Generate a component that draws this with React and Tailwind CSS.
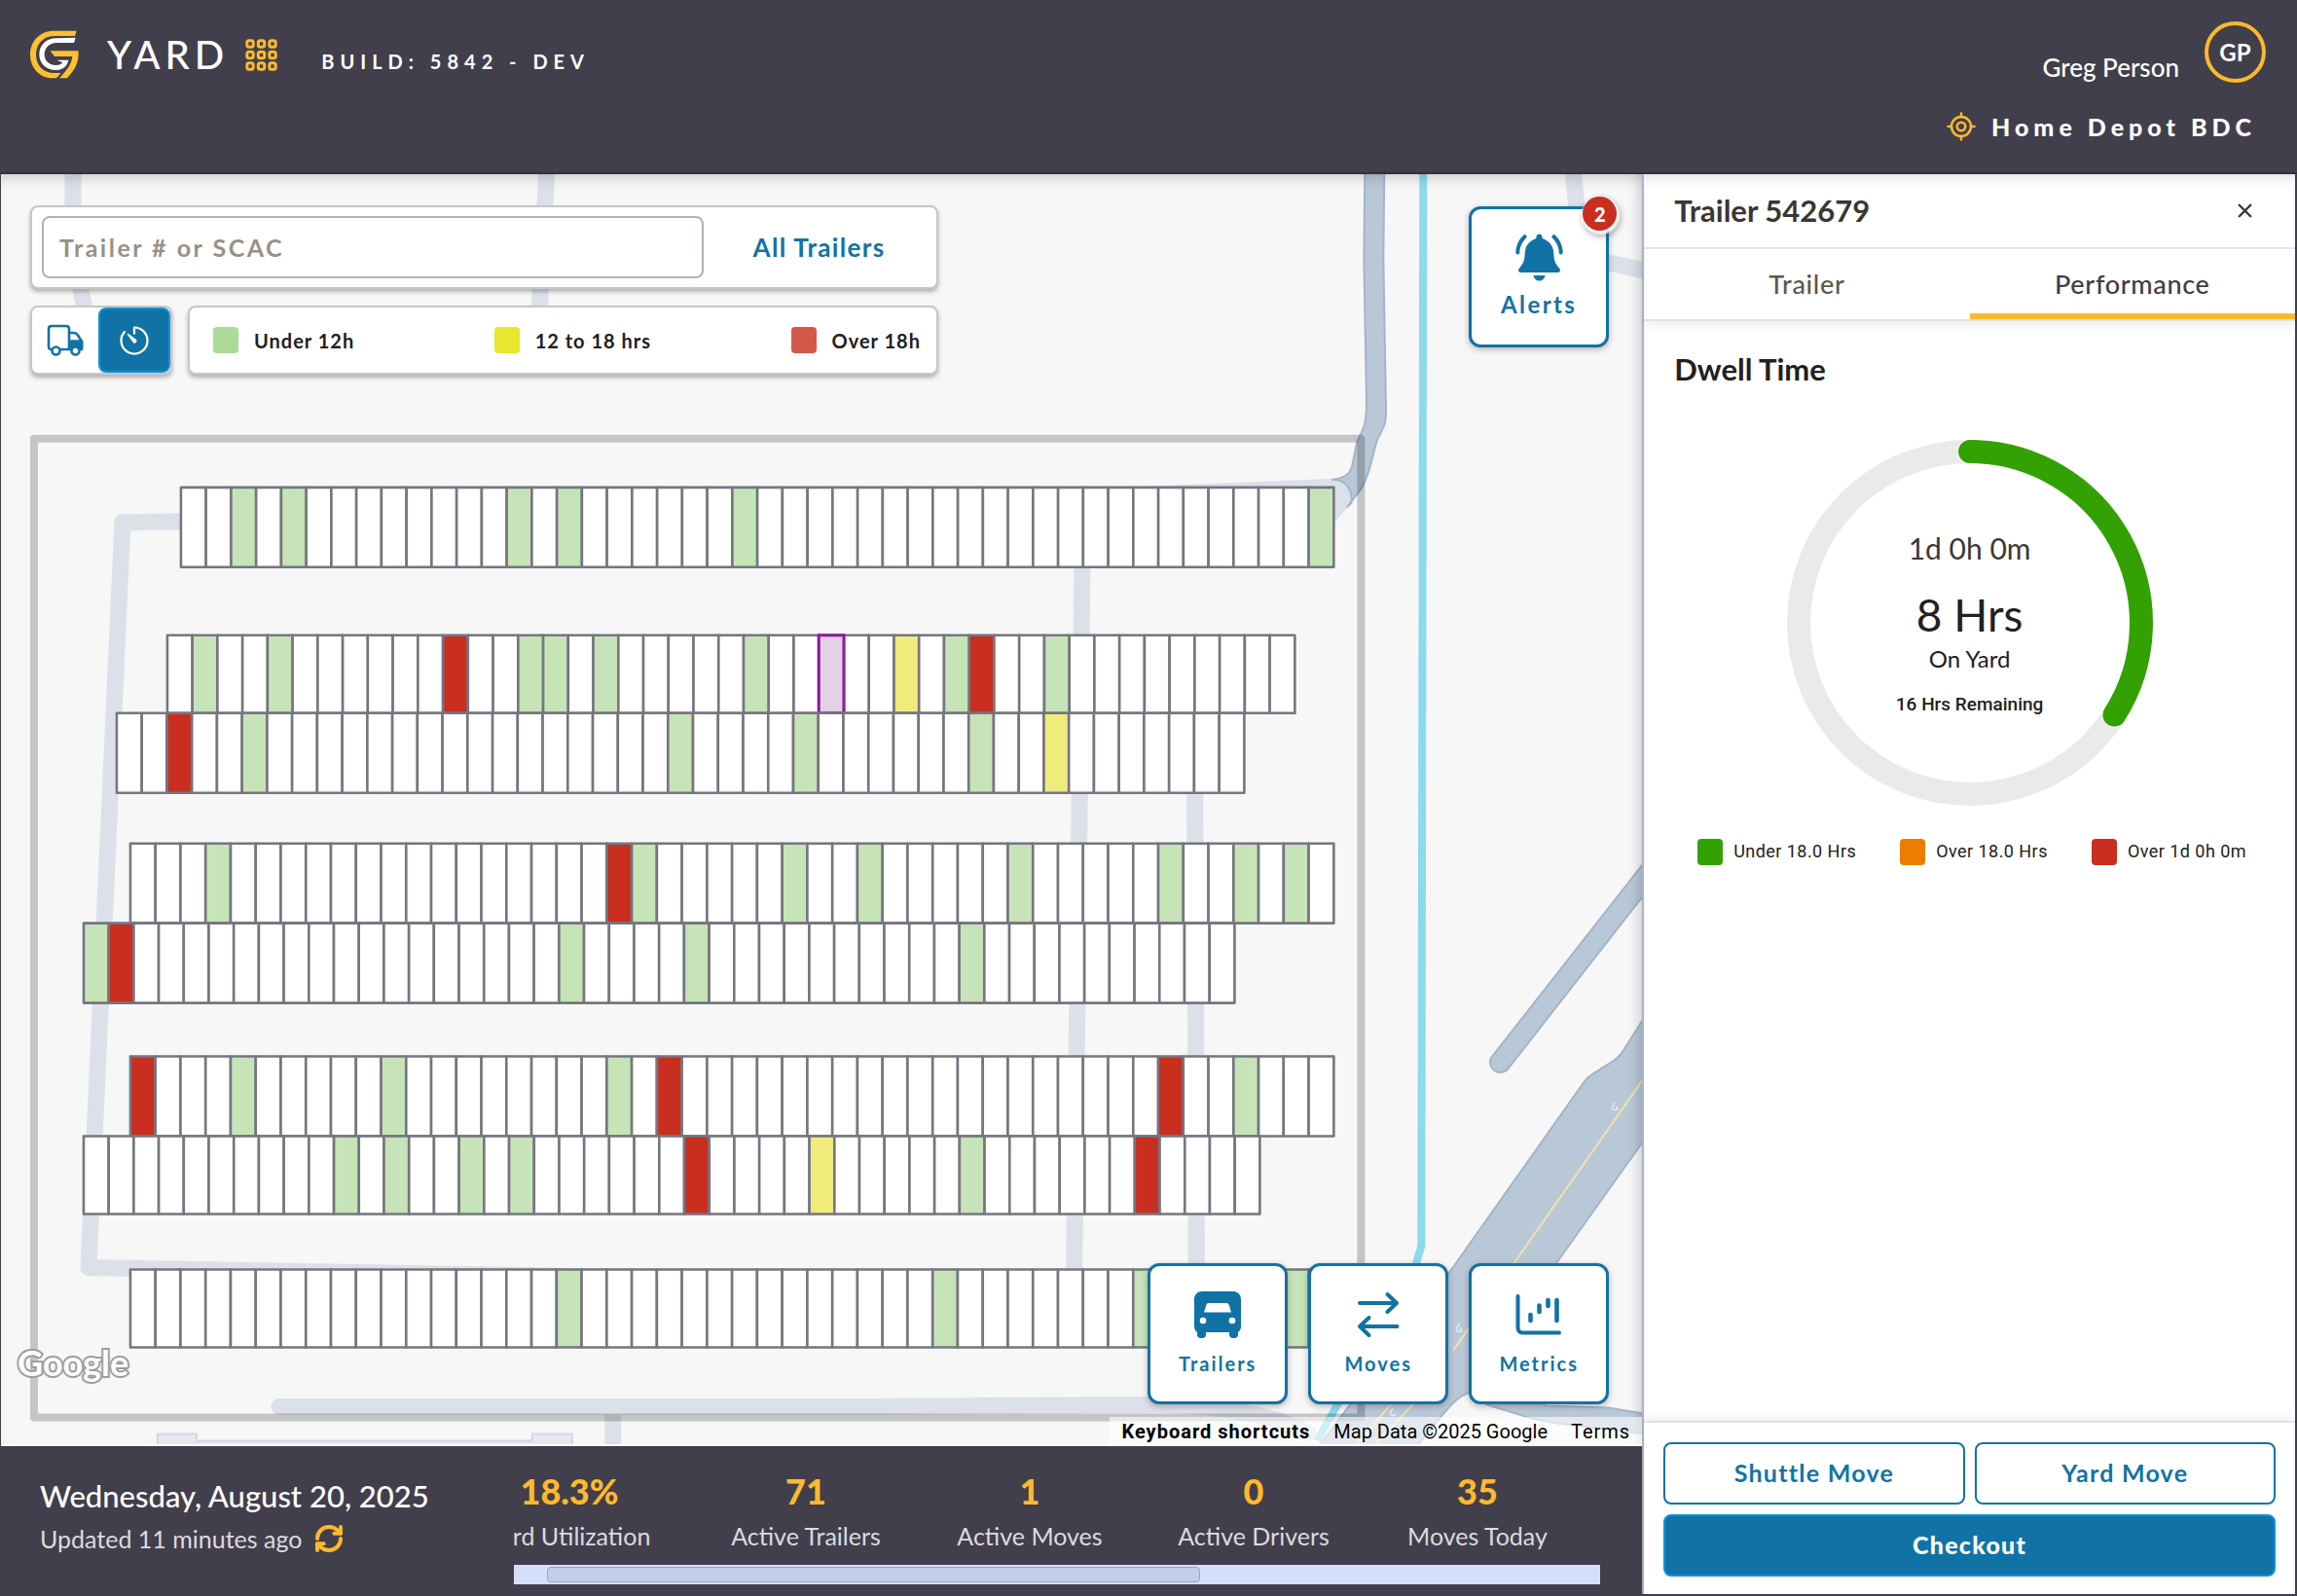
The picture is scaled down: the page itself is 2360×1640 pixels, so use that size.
import React from "react";
import { IoTimerOutline } from "react-icons/io5";
import { RefreshCw, X } from "lucide-react";

/* ---------- yard data ---------- */

const G = "#c6e4b8";
const R = "#c92e1f";
const Y = "#efec7b";

const yardRows = [
  { x: 186, y: 500, h: 82, right: 1371, n: 46, fill: { 2: G, 4: G, 13: G, 15: G, 22: G, 45: G } },
  {
    x: 172, y: 652, h: 80, right: 1331, n: 45,
    fill: { 1: G, 4: G, 11: R, 14: G, 15: G, 17: G, 23: G, 29: Y, 31: G, 32: R, 35: G },
    selected: 26,
  },
  { x: 120, y: 732, h: 82, right: 1279, n: 45, fill: { 2: R, 5: G, 22: G, 27: G, 34: G, 37: Y } },
  { x: 134, y: 866, h: 82, right: 1371, n: 48, fill: { 3: G, 19: R, 20: G, 26: G, 29: G, 35: G, 41: G, 44: G, 46: G } },
  { x: 86, y: 948, h: 82, right: 1269, n: 46, fill: { 0: G, 1: R, 19: G, 24: G, 35: G } },
  { x: 134, y: 1085, h: 82, right: 1371, n: 48, fill: { 0: R, 4: G, 10: G, 19: G, 21: R, 41: R, 44: G } },
  { x: 86, y: 1167, h: 80, right: 1295, n: 47, fill: { 10: G, 12: G, 15: G, 17: G, 24: R, 29: Y, 35: G, 42: R } },
  { x: 134, y: 1304, h: 80, right: 1371, n: 48, fill: { 17: G, 32: G, 40: G, 46: G } },
];

const stats = [
  { value: "18.3%", label: "Yard Utilization", width: "w-[256px]" },
  { value: "71", label: "Active Trailers", width: "w-[230px]" },
  { value: "1", label: "Active Moves", width: "w-[230px]" },
  { value: "0", label: "Active Drivers", width: "w-[230px]" },
  { value: "35", label: "Moves Today", width: "w-[230px]" },
];

/* ---------- icons ---------- */

function Logo() {
  return (
    <svg className="h-[52px] w-[52px]" viewBox="28 62 156 156" fill="none" aria-label="Yard logo">
      <path d="M174 67 L169 83 H104 C70 83 49 110 49 140 C49 174 72 197 104 197 H126 L112 213 H100 C60 213 31 181 31 140 C31 98 62 67 104 67 Z" fill="#fdc02f" />
      <path d="M171 88 L166 104 H112 C90 104 75 120 75 140 C75 160 91 173 110 173 C122 173 127 170 131 165 L113 157 H149 C146 176 131 188 110 188 C80 188 59 167 59 140 C59 111 80 90 112 90 Z" fill="#fff" />
      <path d="M93 129 H180 C181 166 170 186 145 213 H121 C146 187 158 170 161 146 H106 Z" fill="#fdc02f" />
    </svg>
  );
}

function AppsGrid() {
  return (
    <svg className="h-[33px] w-[33px]" viewBox="0 0 33 33" fill="none" stroke="#fdb92c" strokeWidth="3">
      {[5, 16.5, 28].map((y) =>
        [5, 16.5, 28].map((x) => <rect key={x + "-" + y} x={x - 3.2} y={y - 3.2} width="6.4" height="6.4" rx="2" />)
      )}
    </svg>
  );
}

function Target() {
  return (
    <svg className="h-[30px] w-[30px]" viewBox="0 0 30 30" fill="none" stroke="#fdb92c" strokeWidth="2.5" strokeLinecap="round">
      <circle cx="15" cy="15" r="10" />
      <circle cx="15" cy="15" r="4.3" />
      <path d="M15 1.5V5M15 25v3.500M1.500 15H5M25 15h3.500" />
    </svg>
  );
}

function TruckIcon() {
  return (
    <svg className="h-[36px] w-[38px]" viewBox="0 0 38 36" fill="none" stroke="#1173a5" strokeWidth="2.6" strokeLinejoin="round">
      <path d="M5 27H4.500C3 27 2 26 2 24.500V6C2 4 3 3 5 3H20C22 3 23 4 23 6V27H14" />
      <path d="M23 10H28C30 10 31 11 32 12.500L36 19V27H34M26 27H23" />
      <path d="M24 18.500H36V26H24Z" fill="#1173a5" />
      <circle cx="9.500" cy="28.500" r="4" fill="#fff" />
      <circle cx="29.500" cy="28.500" r="4" fill="#fff" />
    </svg>
  );
}

function BellIcon() {
  return (
    <svg className="h-[49px] w-[49px]" viewBox="0 0 49 49">
      <path
        fill="#1173a5"
        d="M24.500 0.500C26.300 0.500 27.600 2 27.600 4C27.600 4.800 28 5.300 28.700 5.600C35 8 39 13 39.300 20C39.600 28 41 31 45 35.500C46.800 37.500 46 40 43.500 40H5.500C3 40 2.200 37.500 4 35.500C8 31 9.400 28 9.700 20C10 13 14 8 20.300 5.600C21 5.300 21.400 4.800 21.400 4C21.400 2 22.700 0.500 24.500 0.500Z"
      />
      <path fill="#1173a5" d="M18.500 43H30.500C30 46.500 27.500 48.500 24.500 48.500S19 46.500 18.500 43Z" />
      <path d="M9.500 3.200C5 7.500 2.500 13 2.300 19.500M39.500 3.200C44 7.500 46.500 13 46.700 19.500" fill="none" stroke="#1173a5" strokeWidth="4" strokeLinecap="round" />
    </svg>
  );
}

function TrailerIcon() {
  return (
    <svg className="h-[48px] w-[48px]" viewBox="0 0 48 48">
      <path
        fill="#1173a5"
        fillRule="evenodd"
        d="M8 0H40C44.500 0 48 3.500 48 8V36C48 39 46.500 41 45 42V44.500C45 46.500 43.500 48 41.500 48H39.500C37.500 48 36 46.500 36 44.500V42H12V44.500C12 46.500 10.500 48 8.500 48H6.500C4.500 48 3 46.500 3 44.500V42C1.500 41 0 39 0 36V8C0 3.500 3.500 0 8 0ZM15 12C13.500 12 12.700 12.700 12.300 14L10 21.500H38L35.700 14C35.300 12.700 34.500 12 33 12Z"
      />
      <circle cx="9" cy="30" r="3.300" fill="#fff" />
      <circle cx="39" cy="30" r="3.300" fill="#fff" />
    </svg>
  );
}

function MovesIcon() {
  return (
    <svg className="h-[48px] w-[48px]" viewBox="0 0 48 48" fill="none" stroke="#1173a5" strokeWidth="4" strokeLinecap="round" strokeLinejoin="round">
      <path d="M5 12H43M33.500 3L43 12L33.500 21" />
      <path d="M43.500 36H5M14.500 27L5 36L14.500 45" />
    </svg>
  );
}

function MetricsIcon() {
  return (
    <svg className="h-[48px] w-[48px]" viewBox="0 0 48 48" fill="none" stroke="#1173a5" strokeWidth="4" strokeLinecap="round" strokeLinejoin="round">
      <path d="M2.500 5V37C2.500 40.500 4.500 42.500 7.500 42.500H45" />
      <path d="M15.500 24V30M24.500 14.500V21M33.500 9V15M42.500 9V30" strokeWidth="4.600" />
    </svg>
  );
}

/* ---------- map ---------- */

function BayRow({ row }) {
  const w = (row.right - row.x) / row.n;
  const cells = Array.from({ length: row.n }, (_, i) => i);
  return (
    <g>
      <g stroke="#767580" strokeWidth="2.600" strokeLinejoin="round">
        {cells.map((i) => (
          <rect key={i} x={row.x + i * w} y={row.y} width={w} height={row.h} fill={row.fill[i] || "#fff"} />
        ))}
      </g>
      {row.selected !== undefined && (
        <rect x={row.x + row.selected * w} y={row.y} width={w} height={row.h} fill="#e3d1e6" stroke="#8a1ba0" strokeWidth="3" />
      )}
    </g>
  );
}

function YardMap() {
  return (
    <svg className="absolute inset-0 h-full w-full" viewBox="1 178 1687 1306" preserveAspectRatio="xMinYMin slice" aria-label="Yard map">
      <rect x="-10" y="170" width="1720" height="1340" fill="#f7f7f7" />
      {/* service lanes */}
      <g fill="none" stroke="#dbe0e9" strokeWidth="17" strokeLinejoin="round">
        <path d="M75 175V225L83 297L90 330" />
        <path d="M562 175L554 330" />
        <path d="M1617 175L1622 225M1640 266L1690 277" />
        <path d="M200 535L126 536L91 1302L700 1313" />
        <path d="M1113 530L1104 1320" />
        <path d="M1228 740L1230 1320" />
        <path d="M287 1445L900 1445L1190 1443C1260 1443 1310 1455 1345 1472" strokeLinecap="round" />
        <path d="M630 1450V1500" />
      </g>
      <path d="M1150 500L1371 491L1384 494L1391 504L1389 516L1371 537V500Z" fill="#dbe0e9" />
      {/* warehouse */}
      <path d="M162 1500V1473H202V1480H547V1473H588V1500Z" fill="#e8e9ee" stroke="#d3d7e6" strokeWidth="2" />
      {/* main roads */}
      <g fill="#b8c8d7" stroke="#a5b4c8" strokeWidth="2" strokeLinejoin="round">
        <path d="M1403 170L1402 265L1404.500 405C1405 425 1404 434 1401 440L1395 453L1390 477C1388 486 1383 490 1370 492C1383 492 1391 502 1389 516L1385 520L1400 500C1408 487 1410 470 1415 453L1423 436C1425 430 1425 420 1424.500 410L1422 265L1423 170Z" />
        <path d="M1700 873L1533 1086A10.500 10.500 0 0 0 1549 1099L1700 906Z" />
        <path d="M1700 1030L1687 1050L1668 1080C1664 1086 1660 1089 1653 1093L1637 1103C1632 1106 1630 1109 1627 1113L1492 1304L1345 1500H1445L1484 1452C1494 1440 1500 1434 1512 1430L1528 1443L1574 1457L1600 1462L1700 1474V1454L1653 1446L1589 1444L1520 1410L1598 1300L1700 1157Z" />
      </g>
      <g stroke="#f3e2a8" strokeWidth="2" fill="none">
        <path d="M1690 1107L1556 1298L1494 1387" />
        <path d="M1430 1442L1390 1490M1453 1442L1408 1490" />
      </g>
      <g stroke="#e4ebf2" strokeWidth="1.500" fill="none">
        <path d="M1660 1132L1657 1137Q1658 1142 1663 1139L1661 1136" />
        <path d="M1500 1360L1497 1365Q1498 1370 1503 1367L1501 1364" />
        <path d="M1432 1446L1429 1451Q1430 1456 1435 1453" />
      </g>
      <path d="M1463 170L1461 1280L1455 1300L1354 1480" fill="none" stroke="#8bdaee" strokeWidth="8" />
      {yardRows.map((row) => (
        <BayRow key={row.x + "-" + row.y} row={row} />
      ))}
      <rect x="35" y="450" width="1364" height="1006" fill="none" stroke="#000" strokeOpacity="0.2" strokeWidth="8" strokeLinejoin="round" />
      <text x="18" y="1414" fontFamily="Lato, sans-serif" fontSize="36" fontWeight="700" fill="#fff" stroke="#9d9d9d" strokeWidth="4" paintOrder="stroke">
        Google
      </text>
    </svg>
  );
}

function MapButton({ icon, label, large }) {
  return (
    <button className="flex h-[145px] w-36 flex-col items-center justify-center gap-3 rounded-xl border-[3px] border-[#1173a5] bg-white text-[#1173a5] shadow-[0_2px_6px_rgba(80,40,40,0.35)]">
      {icon}
      <span className={large ? "pb-1 text-2xl leading-6 font-bold tracking-widest" : "text-xl leading-7 font-bold tracking-widest"}>{label}</span>
    </button>
  );
}

function LegendItem({ color, label, textClass }) {
  return (
    <li className="flex items-center">
      <span className={"h-[27px] w-[26px] rounded-sm " + color} />
      <span className={textClass}>{label}</span>
    </li>
  );
}

function MapArea() {
  const legendText = "ml-4 text-xl leading-7 font-bold tracking-wider text-[#22201e]";
  const card = "rounded-lg border-2 border-[#c9c6c6] bg-white shadow-[0_3px_4px_rgba(80,70,70,0.4)]";
  return (
    <section className="relative min-h-[1000px] flex-1 overflow-hidden border-b-2 border-white">
      <YardMap />
      <div className="pointer-events-none absolute inset-0 shadow-[inset_0_12px_14px_-8px_rgba(0,0,0,0.18),inset_-12px_0_12px_-8px_rgba(0,0,0,0.15)]" />

      <div className="absolute top-8 left-[30px] flex w-[933px] flex-col gap-[17px]">
        <form className={"flex items-center px-2.5 py-[9px] " + card} onSubmit={(e) => e.preventDefault()}>
          <input
            type="text"
            aria-label="Trailer number or SCAC"
            placeholder="Trailer # or SCAC"
            className="h-16 w-[680px] rounded-lg border-2 border-[#b5b1ae] bg-white px-4 text-[25px] font-bold tracking-widest text-[#22201e] placeholder:text-[#989089]"
          />
          <button type="button" className="flex-1 pl-2 text-[26px] font-bold tracking-wider text-[#1173a5]">
            All Trailers
          </button>
        </form>
        <div className="flex h-[71px] gap-4">
          <div className={"flex w-[146px] " + card}>
            <button aria-label="Show trailers" className="flex flex-1 items-center justify-center">
              <TruckIcon />
            </button>
            <button aria-label="Show dwell time" aria-pressed="true" className="flex w-[74px] items-center justify-center rounded-lg border-2 border-[#0c94d8] bg-[#1173a5] text-white">
              <IoTimerOutline className="h-9 w-9" />
            </button>
          </div>
          <ul className={"flex flex-1 items-center justify-between pr-4 pl-6 " + card}>
            <LegendItem color="bg-[#acda98]" label="Under 12h" textClass={legendText} />
            <LegendItem color="bg-[#e8e62f]" label="12 to 18 hrs" textClass={legendText} />
            <LegendItem color="bg-[#d4574a]" label="Over 18h" textClass={legendText} />
          </ul>
        </div>
      </div>

      <div className="absolute top-[33px] right-[34px]">
        <MapButton icon={<BellIcon />} label="Alerts" large />
        <span className="absolute -top-2.5 -right-2 flex h-[35px] w-[35px] items-center justify-center rounded-full bg-[#c92e1f] text-xl font-black text-white shadow-[1px_2px_2px_2px_rgba(255,255,255,0.9),2px_4px_6px_2px_rgba(0,0,0,0.35)]">
          2
        </span>
      </div>

      <div className="absolute right-[34px] bottom-[41px] flex gap-[21px]">
        <MapButton icon={<TrailerIcon />} label="Trailers" />
        <MapButton icon={<MovesIcon />} label="Moves" />
        <MapButton icon={<MetricsIcon />} label="Metrics" />
      </div>

      <div className="absolute right-0 bottom-0 flex h-7 items-center bg-white/60 font-[Roboto,sans-serif] text-xl leading-7 text-black">
        <button className="px-3 pt-0.5 font-bold tracking-wider">Keyboard shortcuts</button>
        <span className="px-3 pt-0.5">Map Data ©2025 Google</span>
        <a href="#terms" className="px-3 pt-0.5 tracking-wider">Terms</a>
      </div>
    </section>
  );
}

function StatsBar() {
  return (
    <footer className="flex bg-[#423f4c] pr-[43px] pb-2.5 pl-10 text-white">
      <div className="w-[487px] shrink-0 pt-[31px]">
        <p className="text-[31px] leading-10 font-medium">Wednesday, August 20, 2025</p>
        <p className="flex items-center gap-3 pt-1 text-[25px] leading-10 text-[#dcdbde]">
          Updated 11 minutes ago
          <button aria-label="Refresh" className="text-[#fdb92c]">
            <RefreshCw size={32} strokeWidth={3} />
          </button>
        </p>
      </div>
      <div className="min-w-0 flex-1 overflow-hidden">
        <dl className="-ml-[71px] flex pt-6 text-center">
          {stats.map((s) => (
            <div key={s.label} className={"flex shrink-0 flex-col-reverse " + s.width}>
              <dt className="text-[25px] leading-10 whitespace-nowrap text-[#dcdbde]">{s.label}</dt>
              <dd className="pb-1 text-4xl leading-[44px] font-black text-[#fdb92c]">{s.value}</dd>
            </div>
          ))}
        </dl>
        <div className="mt-2.5 h-5 bg-[#d5dffa] px-[34px] py-0.5">
          <div className="h-4 w-[64%] rounded-sm border border-[#98a5c4] bg-[#c3cee9]" />
        </div>
      </div>
    </footer>
  );
}

/* ---------- side panel ---------- */

function DwellGauge() {
  return (
    <div className="relative mx-auto mt-[53px] h-[376px] w-[376px]">
      <svg className="h-full w-full" viewBox="0 0 376 376" fill="none" strokeWidth="24">
        <circle cx="188" cy="188" r="176" stroke="#eaeaea" />
        <path d="M188 12A176 176 0 0 1 336.400 282.600" stroke="#fff" strokeWidth="26" strokeLinecap="round" />
        <path d="M188 12A176 176 0 0 1 336.400 282.600" stroke="#33a102" strokeLinecap="round" />
      </svg>
      <div className="absolute inset-0 flex flex-col items-center pt-[91px] text-[#22201e]">
        <p className="text-3xl leading-10 text-[#3a3836]">1d 0h 0m</p>
        <p className="mt-[22px] text-[46px] leading-[54px]">8 Hrs</p>
        <p className="text-2xl leading-9">On Yard</p>
        <p className="mt-[17px] font-[Roboto,sans-serif] text-[19px] leading-6 font-medium">16 Hrs Remaining</p>
      </div>
    </div>
  );
}

function TrailerPanel() {
  const legendText = "ml-[11px] font-[Roboto,sans-serif] text-lg leading-7 tracking-wide text-[#22201e]";
  const outline = "h-16 flex-1 rounded-lg border-2 border-[#1173a5] bg-white text-[25px] font-bold tracking-wider text-[#1173a5]";
  return (
    <aside className="flex w-[28.46%] shrink-0 flex-col border-l-2 border-[#a9b2cd] bg-white">
      <div className="flex h-[77px] items-center justify-between border-b-2 border-[#e6e6e6] pr-10 pl-[31px] shadow-[inset_0_12px_12px_-8px_rgba(0,0,0,0.12)]">
        <h2 className="text-[31px] font-bold text-[#3a3633]">Trailer 542679</h2>
        <button aria-label="Close" className="text-[#3a3633]">
          <X size={23} strokeWidth={2.5} />
        </button>
      </div>
      <div role="tablist" className="grid h-[74px] grid-cols-2 border-b-2 border-[#e2e2e2] text-[27px] font-medium tracking-wide shadow-[0_6px_10px_rgba(0,0,0,0.06)]">
        <button role="tab" aria-selected="false" className="text-[#5d5853]">Trailer</button>
        <button role="tab" aria-selected="true" className="border-b-[6px] border-[#fdb92c] pt-1.5 text-[#3f3c4a]">Performance</button>
      </div>
      <div className="flex-1">
        <h3 className="px-[31px] pt-[29px] text-[31px] leading-10 font-bold text-[#22201e]">Dwell Time</h3>
        <DwellGauge />
        <ul className="flex justify-between pt-[33px] pr-[50px] pl-[55px]">
          <LegendItem color="bg-[#33a102]" label="Under 18.0 Hrs" textClass={legendText} />
          <LegendItem color="bg-[#ed7d00]" label="Over 18.0 Hrs" textClass={legendText} />
          <LegendItem color="bg-[#c92e1f]" label="Over 1d 0h 0m" textClass={legendText} />
        </ul>
      </div>
      <div className="flex flex-col gap-2.5 border-t-2 border-[#e2e2e2] px-5 pt-5 pb-[18px] shadow-[0_-4px_8px_rgba(0,0,0,0.06)]">
        <div className="flex gap-2.5">
          <button className={outline}>Shuttle Move</button>
          <button className={outline}>Yard Move</button>
        </div>
        <button className="h-16 rounded-lg border-2 border-[#0c94d8] bg-[#1173a5] text-[25px] font-black tracking-wider text-white">Checkout</button>
      </div>
    </aside>
  );
}

/* ---------- header ---------- */

function Header() {
  return (
    <header className="flex h-[179px] shrink-0 justify-between border-b-2 border-[#33303c] bg-[#423f4c] text-white">
      <div className="flex h-28 items-center pl-[30px]">
        <Logo />
        <h1 className="ml-7 text-[40px] leading-[52px] font-medium tracking-[5px]">YARD</h1>
        <button aria-label="Applications" className="ml-[17px]">
          <AppsGrid />
        </button>
        <p className="ml-[45px] pt-3.5 text-xl leading-7 font-bold tracking-[6px]">BUILD: 5842 - DEV</p>
      </div>
      <div className="flex flex-col items-end pt-[22px]">
        <div className="flex items-start pr-8">
          <span className="mr-[26px] pt-[31px] text-[26px] leading-8 font-medium">Greg Person</span>
          <button className="flex h-[63px] w-[63px] items-center justify-center rounded-full border-4 border-[#fdb92c] text-2xl font-bold">GP</button>
        </div>
        <button className="mt-[27px] flex items-center gap-4 pr-[42px] text-[25px] leading-9 font-black tracking-[5px]">
          <Target />
          Home Depot BDC
        </button>
      </div>
    </header>
  );
}

export default function App() {
  return (
    <div className="flex min-h-screen flex-col bg-[#423f4c] font-[Lato,sans-serif]">
      <Header />
      <main className="flex flex-1 border-r-2 border-b-2 border-l border-[#423f4c]">
        <div className="flex min-w-0 flex-1 flex-col">
          <MapArea />
          <StatsBar />
        </div>
        <TrailerPanel />
      </main>
    </div>
  );
}
